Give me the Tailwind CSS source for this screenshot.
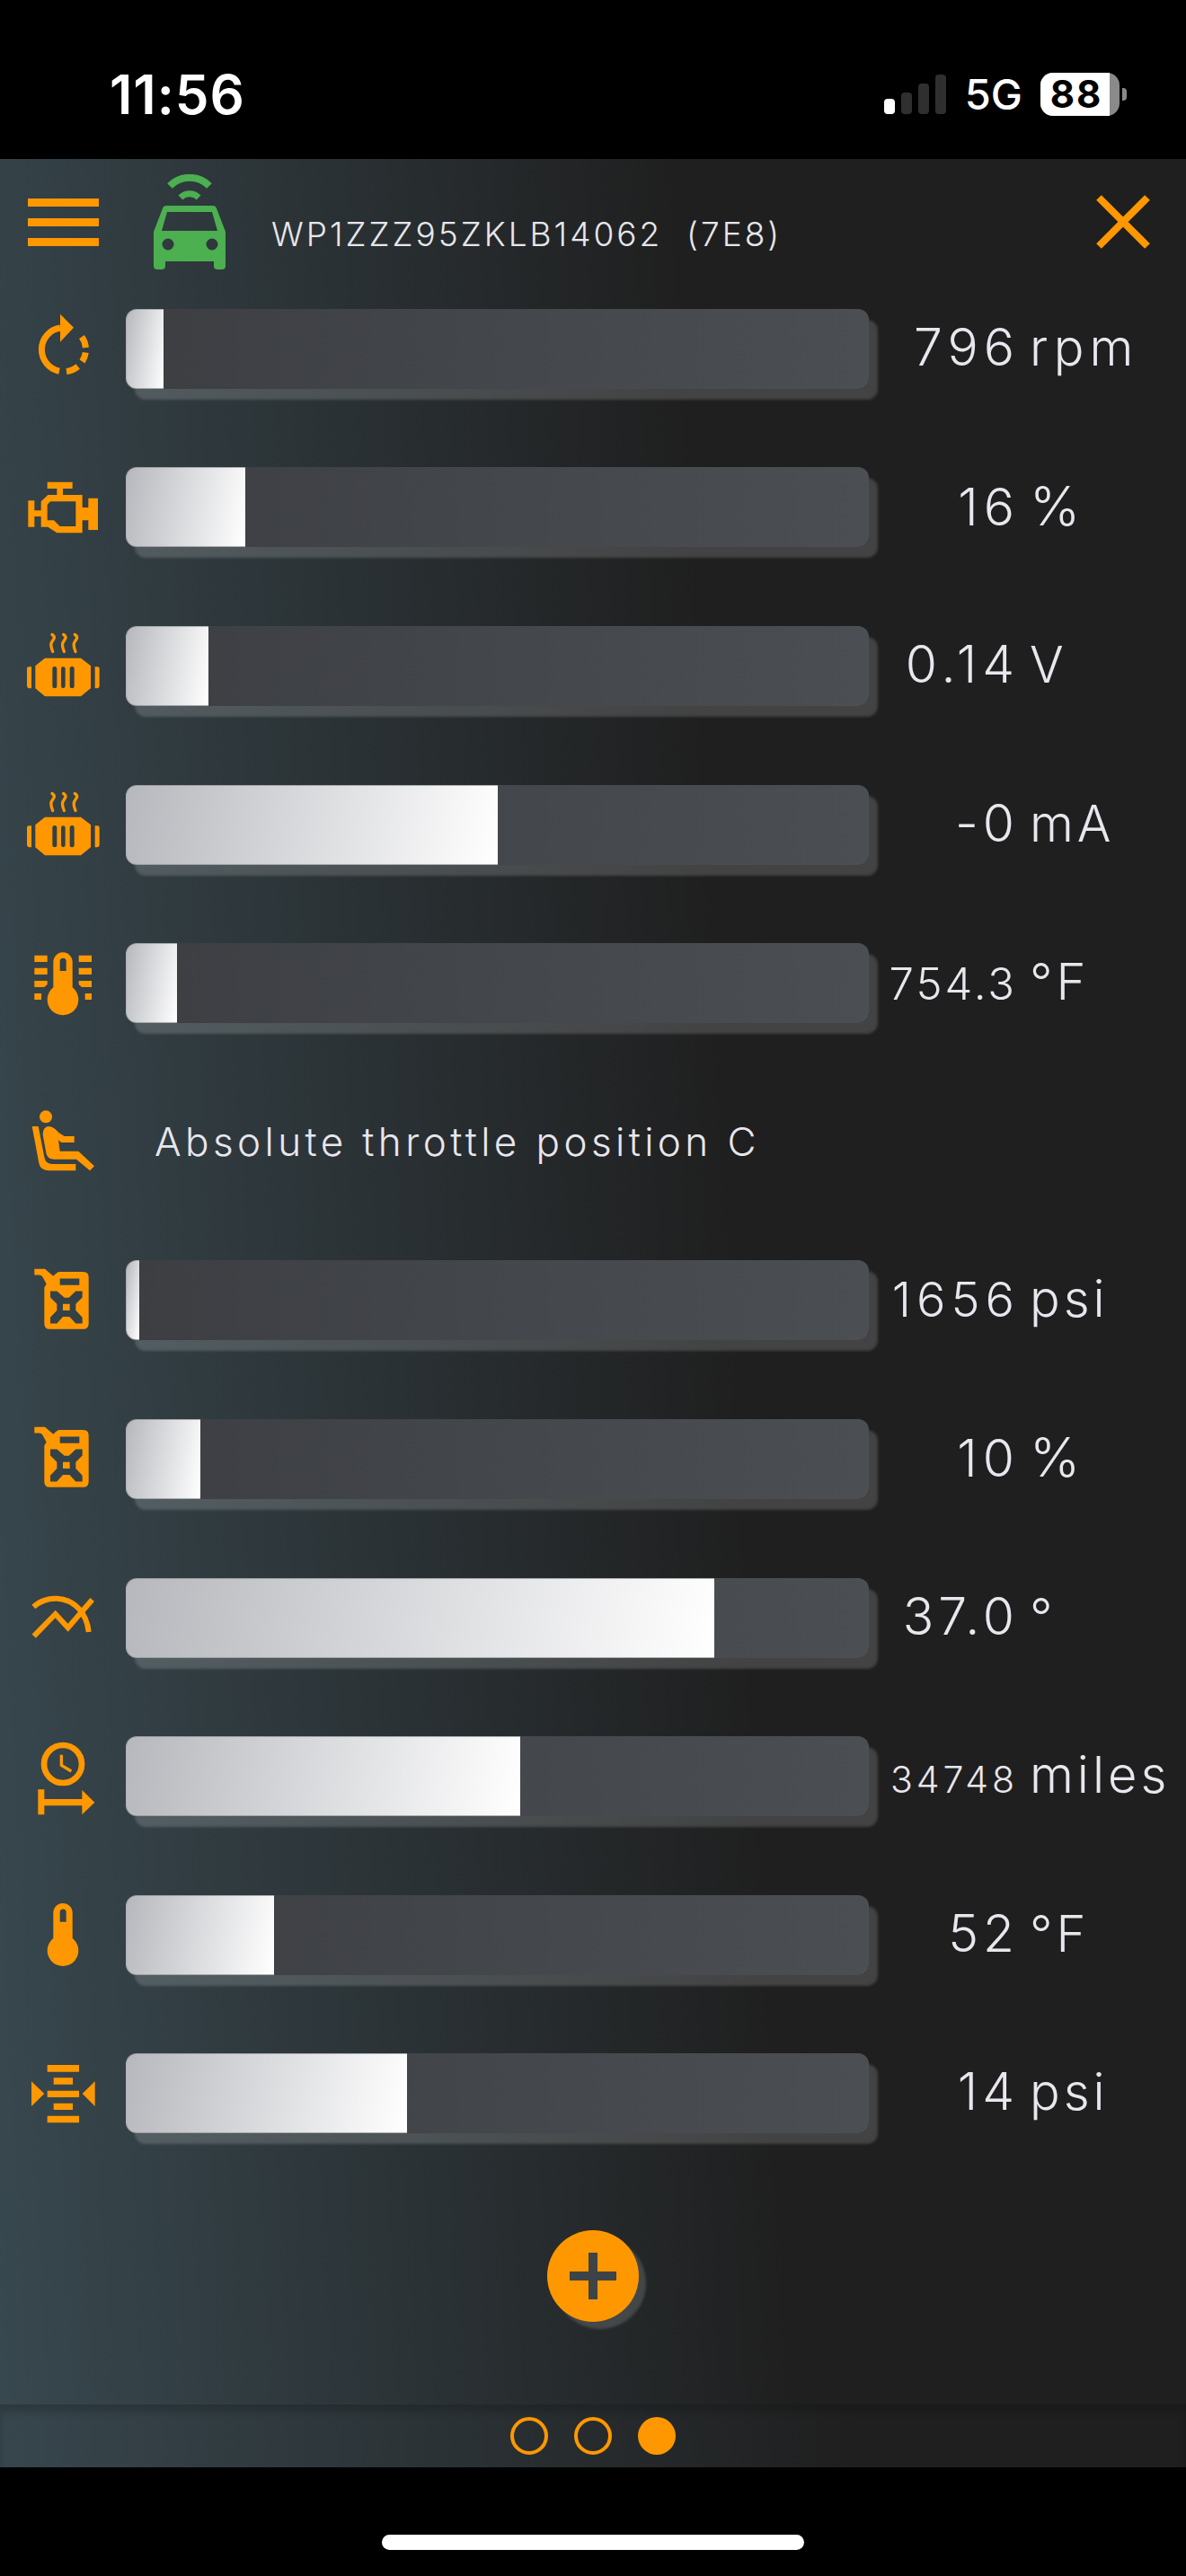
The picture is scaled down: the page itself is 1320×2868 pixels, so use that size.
<!DOCTYPE html>
<html lang="en">
<head>
  <meta charset="UTF-8">
  <meta name="viewport" content="width=device-width, initial-scale=1.0">
  <title>OBD gauges</title>
  <script src="https://cdn.jsdelivr.net/npm/@tailwindcss/browser@4"></script>
</head>
<body class="bg-black font-['Inter',sans-serif] text-[#e9e6ee]">

  <!-- Status bar -->
  <div class="h-[177px] flex items-center pl-[122px] pr-[66px] pt-[32px] text-white">
    <span class="text-[60px] leading-none font-semibold tracking-[1px]">11:56</span>
    <div class="ml-auto flex items-center">
      <div class="flex items-end gap-[7px] h-[44px]">
        <div class="w-[12px] h-[17px] rounded-[4px] bg-white"></div>
        <div class="w-[12px] h-[24px] rounded-[4px] bg-[#2f2f2f]"></div>
        <div class="w-[12px] h-[34px] rounded-[4px] bg-[#2f2f2f]"></div>
        <div class="w-[12px] h-[44px] rounded-[4px] bg-[#2f2f2f]"></div>
      </div>
      <span class="ml-[21px] text-[47px] leading-none font-medium">5G</span>
      <div class="ml-[20px] w-[88px] h-[48px] rounded-[14px] bg-[#8a8a8a]">
        <div class="h-full w-[77px] rounded-l-[14px] bg-white flex items-center justify-center pl-[3px] text-black text-[42px] leading-none font-bold tracking-[2px]">88</div>
      </div>
      <div class="ml-[3px] w-[5px] h-[14px] rounded-r-[4px] bg-[#8a8a8a]"></div>
    </div>
  </div>

  <!-- Main screen -->
  <div class="h-[2500px] flex flex-col bg-[linear-gradient(87deg,#38484f_0%,#1f1f1f_61%)]">
    <!-- Header -->
    <div class="h-[123px] shrink-0 flex items-center pt-[17px] pl-[31px] pr-[40px]">
      <div class="flex flex-col gap-[13px]">
        <div class="w-[79px] h-[9px] bg-[#ff9800]"></div>
        <div class="w-[79px] h-[9px] bg-[#ff9800]"></div>
        <div class="w-[79px] h-[9px] bg-[#ff9800]"></div>
      </div>
      <svg class="ml-[61px] w-[80px] h-[106px]" viewBox="171 193 80 106" fill="#4caf50">
        <path d="M189 206a31 31 0 0 1 44 0" fill="none" stroke="#4caf50" stroke-width="8"/>
        <path d="M201 219a14 14 0 0 1 20 0" fill="none" stroke="#4caf50" stroke-width="7"/>
        <path fill-rule="evenodd" d="M185 228h52q3 0 4 3l10 26v38q0 4-4 4h-5q-4 0-4-4v-5h-54v5q0 4-4 4h-5q-4 0-4-4v-38l10-26q1-3 4-3zM186 235l-6 21h62l-6-21zM187 264.500a6.500 6.500 0 1 0 0 13a6.500 6.500 0 1 0 0-13zM236 264.500a6.500 6.500 0 1 0 0 13a6.500 6.500 0 1 0 0-13z"/>
      </svg>
      <span class="ml-[51px] mt-[26px] text-[37px] leading-none font-light tracking-[3px] whitespace-pre text-[#e6e6ec]">WP1ZZZ95ZKLB14062  (7E8)</span>
      <svg class="ml-auto w-[60px] h-[60px]" viewBox="0 0 60 60"><path d="M3 3L57 57M57 3L3 57" stroke="#ff9800" stroke-width="8"/></svg>
    </div>

    <!-- Gauge rows -->
    <div id="rows" class="flex flex-col"></div>

    <!-- Add button -->
    <button class="mt-[64px] mx-auto w-[102px] h-[102px] rounded-full bg-[#ff9800] flex items-center justify-center shadow-[8px_8px_3px_rgba(255,255,255,0.15)]">
      <svg class="w-[52px] h-[52px]" viewBox="0 0 52 52"><path d="M21 0h10v21h21v10H31v21H21V31H0V21h21z" fill="#3e4347"/></svg>
    </button>
  </div>

  <!-- Page dots -->
  <div class="h-[70px] flex items-center justify-center gap-[29px] bg-[linear-gradient(90deg,#37464d_0%,#1f1f1f_72%)] shadow-[inset_0_8px_8px_rgba(0,0,0,0.18)]">
    <div class="w-[42px] h-[42px] rounded-full border-[4px] border-[#ff9800]"></div>
    <div class="w-[42px] h-[42px] rounded-full border-[4px] border-[#ff9800]"></div>
    <div class="w-[42px] h-[42px] rounded-full bg-[#ff9800]"></div>
  </div>

  <!-- Home indicator -->
  <div class="h-[121px] flex justify-center pt-[75px]">
    <div class="w-[470px] h-[17px] rounded-full bg-white"></div>
  </div>

  <script>
    const boiler = `<svg class="w-[100px] h-[100px]" viewBox="60 574.500 300 300" fill="#ff9800">
      <path fill-rule="evenodd" d="M150 700H270L303 725V800L270 827H150L118 800V725ZM175 735a7.500 7.500 0 0 1 15 0v58a7.500 7.500 0 0 1-15 0zM204 735a7 7 0 0 1 14 0v58a7 7 0 0 1-14 0zM233 735a7.500 7.500 0 0 1 15 0v58a7.500 7.500 0 0 1-15 0z"/>
      <path d="M90 735q0-7 7-7h8v72h-8q-7 0-7-7zM332 735q0-7-7-7h-8v72h8q7 0 7-7z"/>
      <path d="M174 621c12 8 6 15 2 20c-6 8-9 14 0 37M212 621c12 8 6 15 2 20c-6 8-9 14 0 37M250 621c12 8 6 15 2 20c-6 8-9 14 0 37" fill="none" stroke="#ff9800" stroke-width="10" stroke-linecap="round"/>
    </svg>`;

    const can = `<svg class="w-[100px] h-[100px]" viewBox="60 53.700 300 300" fill="#ff9800">
      <path fill-rule="evenodd" d="M115 98H150L178 122Q190 108 200 108H278Q296 108 296 126V281Q296 299 278 299H166Q148 299 148 281V160L155 148L142 124Q138 118 130 118H115ZM200 130V152H265V130ZM168 172H190L215 194H230L253 172H275V193L253 215V237L275 260V280H253L232 258H210L190 280H168V260L190 237V215L168 193ZM210 215V237H233V215Z"/>
    </svg>`;

    const thermoBody = `<path fill-rule="evenodd" d="M178 452a32 32 0 0 1 64 0V537A52 52 0 1 1 178 537ZM200 450V482H221V450a10.500 10.500 0 0 0-21 0Z"/>`;

    const icons = {
      rotate: `<svg class="w-[100px] h-[100px]" viewBox="20 338.300 100 100" fill="none" stroke="#ff9800" stroke-width="7">
        <path d="M67 365.300A24.500 24.500 0 0 0 66 413.500"/>
        <path d="M91 375.400A24.500 24.500 0 0 1 95.400 387.400M95.300 392.900A24.500 24.500 0 0 1 91.500 402.800M86.700 408.300A24.500 24.500 0 0 1 74 413.800"/>
        <path d="M67 350L82 365L67 381Z" fill="#ff9800" stroke="none"/>
      </svg>`,
      engine: `<svg class="w-[100px] h-[100px]" viewBox="60 45 300 300" fill="#ff9800">
        <path fill-rule="evenodd" d="M158 110H242V132H210V153H275V195H295V164H327V270H295V238H275V280H190L160 260H137V225H115V260H94V172H115V205H137V175L160 153H190V132H158ZM168 175L158 185V238H180L200 258H253V175Z"/>
      </svg>`,
      boiler,
      thermoLines: `<svg class="w-[100px] h-[100px]" viewBox="60 374 300 300" fill="#ff9800">
        ${thermoBody}
        <path d="M115 430H158V452H115ZM115 472H158V494H115ZM115 515H158V527L148 536H115ZM115 557H138V578H115ZM263 430H306V452H263ZM263 472H306V494H263ZM263 515H306V536H273L263 527ZM284 557H306V578H284Z"/>
      </svg>`,
      seat: `<svg class="w-[100px] h-[100px]" viewBox="60 903 300 300" fill="#ff9800">
        <circle cx="153" cy="970" r="21"/>
        <path d="M107 1002H128L148 1105Q152 1128 175 1128H253V1150H165Q135 1150 130 1125Z"/>
        <path d="M143 1030Q143 1002 165 1002Q180 1004 195 1022L215 1035H248V1056H205L195 1048L200 1085H262L315 1135L300 1150L255 1112H180Q160 1112 155 1095Z"/>
      </svg>`,
      can,
      trend: `<svg class="w-[100px] h-[100px]" viewBox="60 93 300 300" fill="none" stroke="#ff9800" stroke-width="18">
        <path d="M112 207C140 182 165 178 190 179C250 182 290 230 296 291"/>
        <path d="M113 305L185 231L227 277L308 183"/>
      </svg>`,
      clock: `<svg class="w-[100px] h-[100px]" viewBox="60 83 300 300" fill="#ff9800">
        <circle cx="210" cy="191" r="63" fill="none" stroke="#ff9800" stroke-width="20"/>
        <path d="M205 160V195L238 215" fill="none" stroke="#ff9800" stroke-width="10"/>
        <path d="M127 276H148V308H274V278L316 319L274 360V330H148V360H127Z"/>
      </svg>`,
      thermo: `<svg class="w-[100px] h-[100px]" viewBox="60 375 300 300" fill="#ff9800">${thermoBody}</svg>`,
      squeeze: `<svg class="w-[100px] h-[100px]" viewBox="60 1143 300 300" fill="#ff9800">
        <path d="M158 1197H264V1220H158ZM179 1240H243V1262H179ZM158 1283H264V1305H158ZM179 1325H243V1347H179ZM158 1367H264V1390H158ZM105 1252L148 1293L105 1335ZM317 1252L275 1293L317 1335Z"/>
      </svg>`
    };

    // fill is the white part of the bar, in px out of the 827px track.
    // size carries the number's own spacing, the app shrinks long numbers to fit
    const rows = [
      { icon: 'rotate', fill: 42, num: '796', size: 'text-[57px] tracking-[6px] -mr-[6px]', unit: 'rpm', unitSize: 'text-[56px] tracking-[6px]' },
      { icon: 'engine', fill: 133, num: '16', size: 'text-[57px] tracking-[6px] -mr-[6px]', unit: '%', unitSize: 'text-[60px]' },
      { icon: 'boiler', fill: 92, num: '0.14', size: 'text-[57px] tracking-[6px] -mr-[6px]', unit: 'V' },
      { icon: 'boiler', fill: 414, num: '-0', size: 'text-[57px] tracking-[5px] -mr-[5px]', unit: 'mA' },
      { icon: 'thermoLines', fill: 57, num: '754.3', size: 'text-[49px] tracking-[3px] -mr-[3px]', unit: '°F' },
      { icon: 'seat', label: 'Absolute throttle position C' },
      { icon: 'can', fill: 15, num: '1656', size: 'text-[54px] tracking-[6px] -mr-[6px]', unit: 'psi' },
      { icon: 'can', fill: 83, num: '10', size: 'text-[57px] tracking-[6px] -mr-[6px]', unit: '%', unitSize: 'text-[60px]' },
      { icon: 'trend', fill: 655, num: '37.0', size: 'text-[57px] tracking-[5px] -mr-[5px]', unit: '°' },
      { icon: 'clock', fill: 439, num: '34748', size: 'text-[41px] tracking-[4px] -mr-[4px]', unit: 'miles' },
      { icon: 'thermo', fill: 165, num: '52', size: 'text-[57px] tracking-[5px] -mr-[5px]', unit: '°F' },
      { icon: 'squeeze', fill: 313, num: '14', size: 'text-[57px] tracking-[5px] -mr-[5px]', unit: 'psi' }
    ];

    const container = document.getElementById('rows');

    rows.forEach(row => {
      const el = document.createElement('div');
      el.className = 'h-[176.6px] shrink-0 flex items-center';

      const icon = `<div class="w-[140px] shrink-0 flex justify-center">${icons[row.icon]}</div>`;

      if (row.label) {
        el.innerHTML = `${icon}<span class="ml-[32px] text-[44px] leading-none font-light tracking-[4.400px]">${row.label}</span>`;
      } else {
        el.innerHTML = `${icon}
          <div class="w-[827px] h-[89px] shrink-0 rounded-[12px] bg-[linear-gradient(90deg,#3c3e42,#4b4f54)] shadow-[10px_12px_3px_rgba(255,255,255,0.16)]">
            <div class="h-full rounded-l-[12px] border border-r-0 border-[#8f9398]/70 bg-[linear-gradient(100deg,#b6b8bd,#ffffff)]" style="width: ${row.fill}px"></div>
          </div>
          <div class="flex items-baseline font-light leading-none mb-[4px]">
            <div class="w-[162px] flex justify-end"><span class="${row.size}">${row.num}</span></div>
            <span class="ml-[17px] ${row.unitSize || 'text-[56px] tracking-[4px]'}">${row.unit}</span>
          </div>`;
      }

      container.appendChild(el);
    });
  </script>

</body>
</html>
